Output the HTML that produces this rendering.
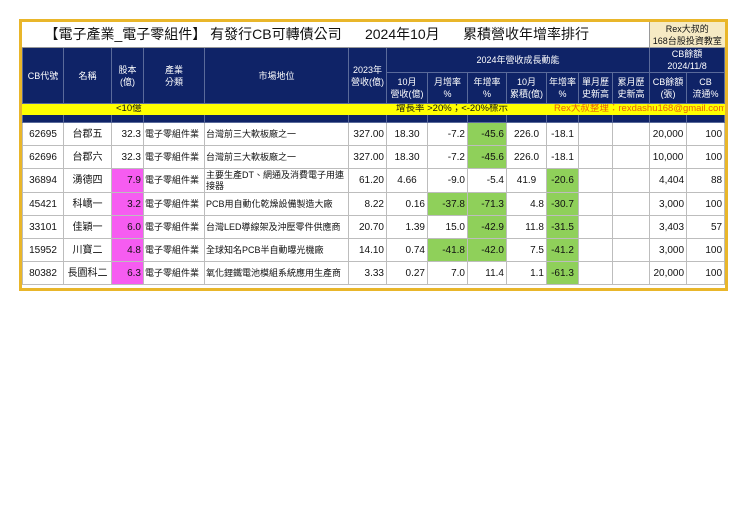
<!DOCTYPE html>
<html><head><meta charset="utf-8"><style>
body{margin:0;background:#fff;width:740px;height:523px;position:relative;font-family:"Liberation Sans","Noto Sans CJK TC",sans-serif;}
.frame{position:absolute;left:19px;top:19px;width:703px;height:266px;border:3px solid #e9b62a;}
table{position:absolute;left:22px;top:22px;width:702px;border-collapse:collapse;table-layout:fixed;}
td{padding:0 2px;font-size:10px;color:#111;border:1px solid #bdbdbd;white-space:nowrap;overflow:hidden;line-height:11px;}
.h td{background:#0f2367;color:#fff;text-align:center;font-size:9px;border-color:#5a6a9a;line-height:12px;}
.r{text-align:right}.c{text-align:center}
.g{background:#8fd05a}.m{background:#f65cf1}
.k{font-size:9px;padding:0 1px}
.title td{border:none;font-size:14px;height:25px;border-bottom:1px solid #999;}
</style></head><body>
<div class="frame"></div>
<table>
<colgroup><col style="width:41px"><col style="width:48px"><col style="width:32px"><col style="width:61px"><col style="width:144px"><col style="width:38px"><col style="width:41px"><col style="width:40px"><col style="width:39px"><col style="width:40px"><col style="width:32px"><col style="width:34px"><col style="width:37px"><col style="width:37px"><col style="width:38px"></colgroup>
<tr class="title"><td colspan="13" style="padding-left:22px;white-space:pre">【電子產業_電子零組件】 有發行CB可轉債公司      2024年10月      累積營收年增率排行</td><td colspan="2" style="background:#f6eac4;font-size:9px;text-align:center;line-height:12px;border-left:1px solid #999">Rex大叔的<br>168台股投資教室</td></tr>
<tr class="h" style="height:21px"><td rowspan="2">CB代號</td><td rowspan="2">名稱</td><td rowspan="2">股本<br>(億)</td><td rowspan="2">產業<br>分類</td><td rowspan="2">市場地位</td><td rowspan="2">2023年<br>營收(億)</td><td colspan="7">2024年營收成長動能</td><td colspan="2">CB餘額<br>2024/11/8</td></tr>
<tr class="h" style="height:31px"><td>10月<br>營收(億)</td><td>月增率<br>%</td><td>年增率<br>%</td><td>10月<br>累積(億)</td><td>年增率<br>%</td><td>單月歷<br>史新高</td><td>累月歷<br>史新高</td><td>CB餘額<br>(張)</td><td>CB<br>流通%</td></tr>
<tr style="height:10px"><td colspan="15" style="background:#ffff00;padding:0;position:relative;font-size:9.5px;line-height:10px;height:10px;border-color:#ffff00"><span style="position:absolute;left:93px;top:0">&lt;10億</span><span style="position:absolute;left:373px;top:0">增長率 &gt;20%；&lt;-20%標示</span><span style="position:absolute;left:531px;top:0;color:#e8600a">Rex大叔整理：rexdashu168@gmail.com</span></td></tr>
<tr class="h" style="height:8px"><td style="line-height:6px"></td><td></td><td></td><td></td><td></td><td></td><td></td><td></td><td></td><td></td><td></td><td></td><td></td><td></td><td></td></tr>
<tr style="height:23px"><td class="c">62695</td><td class="c">台郡五</td><td class="r">32.3</td><td class="k">電子零組件業</td><td class="k">台灣前三大軟板廠之一</td><td class="r">327.00</td><td class="c">18.30</td><td class="r">-7.2</td><td class="r g">-45.6</td><td class="c">226.0</td><td class="c">-18.1</td><td></td><td></td><td class="c">20,000</td><td class="r">100</td></tr>
<tr style="height:23px"><td class="c">62696</td><td class="c">台郡六</td><td class="r">32.3</td><td class="k">電子零組件業</td><td class="k">台灣前三大軟板廠之一</td><td class="r">327.00</td><td class="c">18.30</td><td class="r">-7.2</td><td class="r g">-45.6</td><td class="c">226.0</td><td class="c">-18.1</td><td></td><td></td><td class="c">10,000</td><td class="r">100</td></tr>
<tr style="height:24px"><td class="c">36894</td><td class="c">湧德四</td><td class="r m">7.9</td><td class="k">電子零組件業</td><td class="k" style="white-space:normal">主要生產DT、網通及消費電子用連接器</td><td class="r">61.20</td><td class="c">4.66</td><td class="r">-9.0</td><td class="r">-5.4</td><td class="c">41.9</td><td class="c g">-20.6</td><td></td><td></td><td class="r">4,404</td><td class="r">88</td></tr>
<tr style="height:23px"><td class="c">45421</td><td class="c">科嶠一</td><td class="r m">3.2</td><td class="k">電子零組件業</td><td class="k">PCB用自動化乾燥設備製造大廠</td><td class="r">8.22</td><td class="r">0.16</td><td class="r g">-37.8</td><td class="r g">-71.3</td><td class="r">4.8</td><td class="c g">-30.7</td><td></td><td></td><td class="r">3,000</td><td class="r">100</td></tr>
<tr style="height:23px"><td class="c">33101</td><td class="c">佳穎一</td><td class="r m">6.0</td><td class="k">電子零組件業</td><td class="k">台灣LED導線架及沖壓零件供應商</td><td class="r">20.70</td><td class="r">1.39</td><td class="r">15.0</td><td class="r g">-42.9</td><td class="r">11.8</td><td class="c g">-31.5</td><td></td><td></td><td class="r">3,403</td><td class="r">57</td></tr>
<tr style="height:23px"><td class="c">15952</td><td class="c">川寶二</td><td class="r m">4.8</td><td class="k">電子零組件業</td><td class="k">全球知名PCB半自動曝光機廠</td><td class="r">14.10</td><td class="r">0.74</td><td class="r g">-41.8</td><td class="r g">-42.0</td><td class="r">7.5</td><td class="c g">-41.2</td><td></td><td></td><td class="r">3,000</td><td class="r">100</td></tr>
<tr style="height:23px"><td class="c">80382</td><td class="c">長園科二</td><td class="r m">6.3</td><td class="k">電子零組件業</td><td class="k">氧化鋰鐵電池模組系統應用生產商</td><td class="r">3.33</td><td class="r">0.27</td><td class="r">7.0</td><td class="r">11.4</td><td class="r">1.1</td><td class="c g">-61.3</td><td></td><td></td><td class="r">20,000</td><td class="r">100</td></tr>
</table>
</body></html>
